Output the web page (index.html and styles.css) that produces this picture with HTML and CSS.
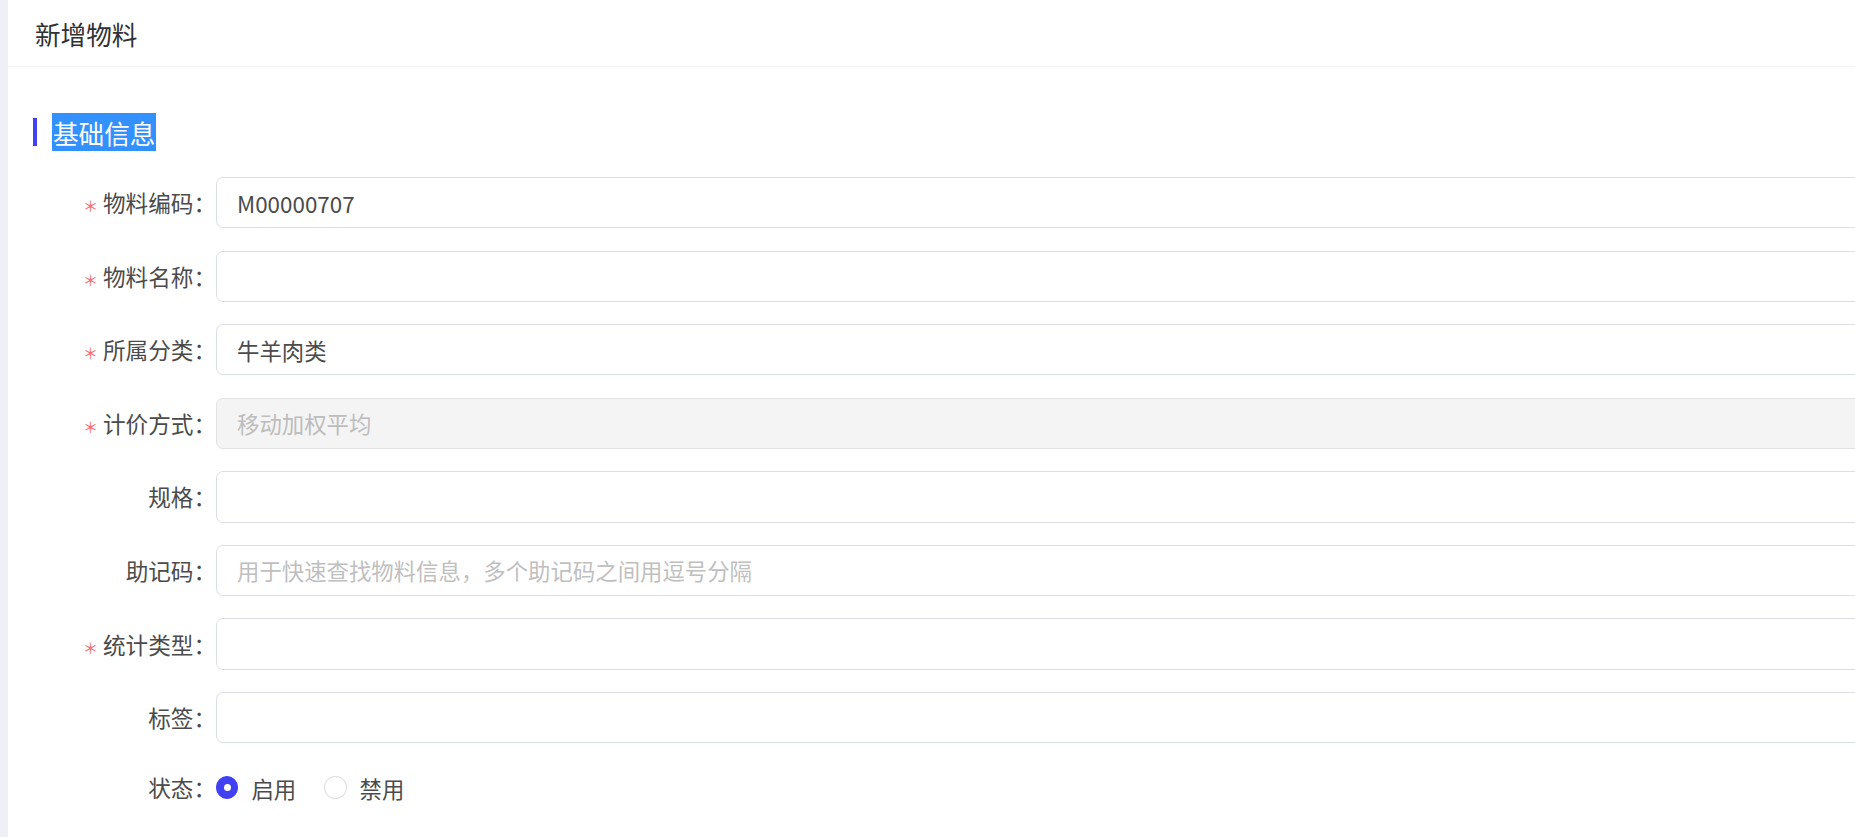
FILE: index.html
```html
<html>
<head>
    <meta name="viewport" content="width=device-width, initial-scale=1"/>
    <title>新增物料</title>
    <link rel="stylesheet" href="styles.css">
</head>
<body>
    <div class="side-strip"></div>
    <div class="main">
        <div class="page-header">新增物料</div>
        <div class="content">
            <div class="section-title">
                <span class="bar"></span>
                <span class="title-text">基础信息</span>
            </div>
            <div class="form">
                <div class="form-row">
                    <label class="label"><span class="req">＊</span>物料编码：</label>
                    <input class="input" type="text" value="M00000707">
                </div>
                <div class="form-row">
                    <label class="label"><span class="req">＊</span>物料名称：</label>
                    <input class="input" type="text" value="">
                </div>
                <div class="form-row">
                    <label class="label"><span class="req">＊</span>所属分类：</label>
                    <input class="input" type="text" value="牛羊肉类">
                </div>
                <div class="form-row">
                    <label class="label"><span class="req">＊</span>计价方式：</label>
                    <input class="input disabled" type="text" value="移动加权平均" disabled>
                </div>
                <div class="form-row">
                    <label class="label">规格：</label>
                    <input class="input" type="text" value="">
                </div>
                <div class="form-row">
                    <label class="label">助记码：</label>
                    <input class="input" type="text" placeholder="用于快速查找物料信息，多个助记码之间用逗号分隔">
                </div>
                <div class="form-row">
                    <label class="label"><span class="req">＊</span>统计类型：</label>
                    <input class="input" type="text" value="">
                </div>
                <div class="form-row">
                    <label class="label">标签：</label>
                    <input class="input" type="text" value="">
                </div>
                <div class="form-row status-row">
                    <label class="label">状态：</label>
                    <div class="radio-group">
                        <span class="radio checked"><span class="radio-dot"></span>启用</span>
                        <span class="radio"><span class="radio-dot"></span>禁用</span>
                    </div>
                </div>
            </div>
        </div>
    </div>
</body>
</html>
```

FILE: styles.css
```css
body{
    margin: 0;
    height: 100vh;
    display: flex;
    overflow: hidden;
    font-family: "Noto Sans CJK SC", "Noto Sans", sans-serif;
    color: #303133;
    background-color: #ffffff;
}
.side-strip{
    width: 8px;
    flex-shrink: 0;
    background-color: #eff0f5;
}
.main{
    flex: 1;
    min-width: 0;
    overflow: hidden;
}
.page-header{
    height: 67px;
    display: flex;
    align-items: center;
    padding-left: 27px;
    font-size: 25.6px;
    color: #303133;
    border-bottom: 1px solid #f2f2f2;
    box-sizing: border-box;
}
.content{
    padding: 46px 0 0 25px;
    width: 1900px;
}
.section-title{
    display: flex;
    align-items: center;
    height: 38px;
}
.bar{
    width: 4px;
    height: 28px;
    background-color: #4141f2;
    margin-right: 15px;
}
.title-text{
    display: flex;
    align-items: center;
    height: 38px;
    padding: 0 1px;
    font-size: 25.6px;
    color: #ffffff;
    background-color: #3391ff;
}
.form{
    margin-top: 26px;
    display: flex;
    flex-direction: column;
    gap: 22.4px;
}
.form-row{
    display: grid;
    grid-template-columns: 183px 1fr;
    height: 51.2px;
    align-items: center;
}
.label{
    text-align: right;
    padding-right: 0;
    font-size: 22.6px;
    color: #4b4b4b;
    white-space: nowrap;
}
.req{
    color: #f56c6c;
    margin-right: 5px;
    font-size: 15px;
}
.input{
    height: 51.2px;
    box-sizing: border-box;
    border: 1px solid #dcdfe6;
    border-radius: 7px;
    padding: 0 20px;
    font-family: inherit;
    font-size: 22.4px;
    color: #4b4b4b;
    background-color: #ffffff;
    outline: none;
    width: 100%;
}
.input::placeholder{
    color: #bfbfbf;
}
.input.disabled{
    background-color: #f4f4f4;
    border-color: #e2e2e2;
    color: #bdbdbd;
}
.status-row{
    height: 44px;
}
.radio-group{
    display: flex;
    align-items: center;
    gap: 28px;
}
.radio{
    display: flex;
    align-items: center;
    font-size: 22.4px;
    color: #4b4b4b;
}
.radio-dot{
    width: 22.4px;
    height: 22.4px;
    box-sizing: border-box;
    border-radius: 50%;
    border: 1px solid #d9d9d9;
    background-color: #ffffff;
    margin-right: 13px;
    display: flex;
    align-items: center;
    justify-content: center;
}
.radio.checked .radio-dot{
    border-color: #4141f2;
    background-color: #4141f2;
}
.radio.checked .radio-dot::after{
    content: "";
    width: 7px;
    height: 7px;
    border-radius: 50%;
    background-color: #ffffff;
}
```
